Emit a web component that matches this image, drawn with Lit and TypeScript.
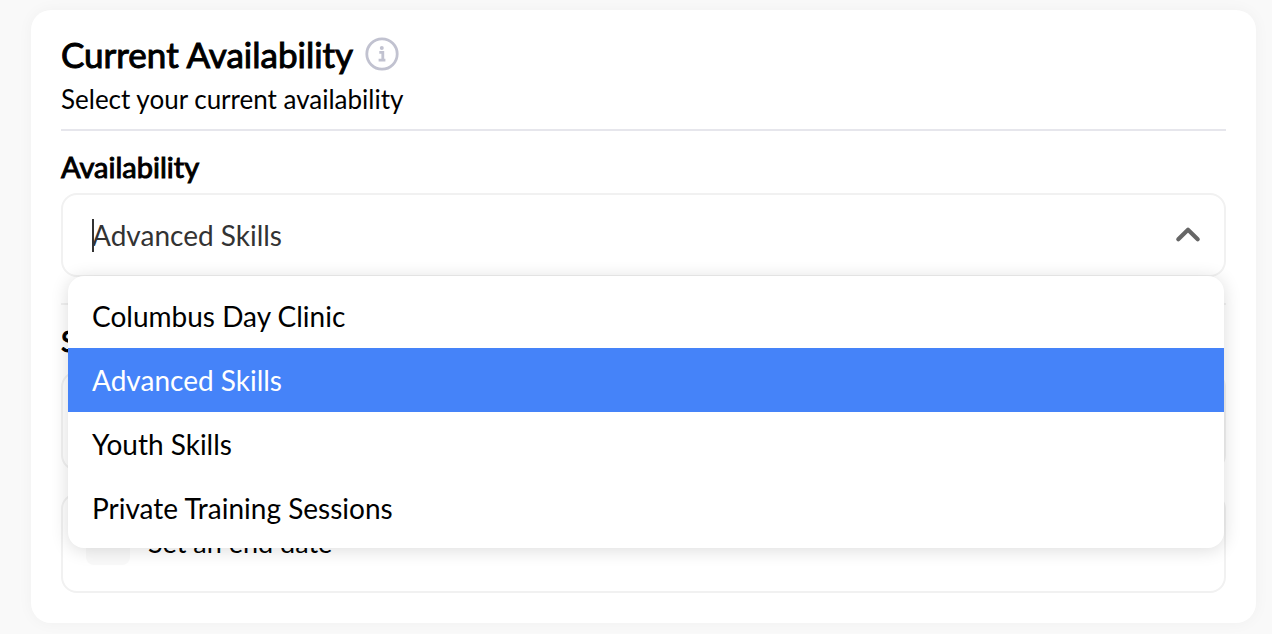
import { LitElement, html, css } from "lit";
import { customElement, state } from "lit/decorators.js";
import { classMap } from "lit/directives/class-map.js";

const PROGRAMS = [
  "Columbus Day Clinic",
  "Advanced Skills",
  "Youth Skills",
  "Private Training Sessions",
];

@customElement("program-select")
export class ProgramSelect extends LitElement {
  @state() private selected = "Advanced Skills";
  @state() private open = true;

  static styles = css`
    :host {
      display: block;
    }
    .field {
      display: grid;
      gap: 8px;
    }
    .label {
      font-size: 29px;
      line-height: 36px;
      -webkit-text-stroke: 1px currentColor;
    }
    .control {
      position: relative;
      display: flex;
      align-items: center;
      padding: 22px 20px 22px 29px;
      border: 2px solid #f1f1f1;
      border-radius: 16px;
    }
    .value {
      flex: 1;
      min-width: 0;
      height: 36px;
      padding: 0;
      border: 0;
      outline: 0;
      background: none;
      font: inherit;
      font-size: 28px;
      line-height: 36px;
      color: #333333;
    }
    .caret {
      position: absolute;
      left: 29px;
      top: 24px;
      width: 2px;
      height: 33px;
      background: #333333;
    }
    .toggle {
      display: flex;
      padding: 0;
      border: 0;
      background: none;
      color: #666666;
      cursor: pointer;
    }
    .closed {
      transform: rotate(180deg);
    }
    .menu {
      position: absolute;
      z-index: 2;
      top: 81px;
      left: 5px;
      right: 0;
      padding: 8px 0;
      border-radius: 16px;
      background: #ffffff;
      box-shadow: 0 2px 18px rgba(0, 0, 0, 0.14);
    }
    .option {
      display: block;
      width: 100%;
      padding: 14px 24px;
      border: 0;
      background: none;
      font: inherit;
      font-size: 28px;
      line-height: 36px;
      text-align: left;
      color: #000000;
      cursor: pointer;
    }
    .active {
      background: #4583f9;
      color: #ffffff;
    }
  `;

  private choose(name: string) {
    this.selected = name;
    this.open = false;
  }

  render() {
    return html`
      <div class="field">
        <label class="label" for="program">Availability</label>
        <div class="control">
          <input
            id="program"
            class="value"
            role="combobox"
            aria-controls="programs"
            aria-expanded=${this.open}
            readonly
            .value=${this.selected}
          />
          ${this.open ? html`<span class="caret"></span>` : ""}
          <button
            class="toggle"
            type="button"
            aria-label="Toggle options"
            @click=${() => (this.open = !this.open)}
          >
            <svg
              class=${classMap({ closed: !this.open })}
              width="32"
              height="32"
              viewBox="0 0 32 32"
              fill="none"
              stroke="currentColor"
              stroke-width="4.2"
              stroke-linecap="round"
              stroke-linejoin="round"
            >
              <path d="M6.3 20.2 16 10.8l9.7 9.4" />
            </svg>
          </button>
          ${this.open
            ? html`<div class="menu" id="programs" role="listbox">
                ${PROGRAMS.map(
                  (name) => html`<button
                    type="button"
                    role="option"
                    aria-selected=${name === this.selected}
                    class=${classMap({
                      option: true,
                      active: name === this.selected,
                    })}
                    @click=${() => this.choose(name)}
                  >
                    ${name}
                  </button>`
                )}
              </div>`
            : ""}
        </div>
      </div>
    `;
  }
}

@customElement("app-root")
export class AppRoot extends LitElement {
  static styles = css`
    :host {
      display: block;
      box-sizing: border-box;
      min-height: 100vh;
      padding: 10px 16px 12px 31px;
      background: #f9f9f9;
      color: #000000;
      font-family: Lato, "Liberation Sans", sans-serif;
    }
    .card {
      padding: 22px 30px 30px;
      border-radius: 20px;
      background: #ffffff;
      box-shadow: 0 0 16px rgba(0, 0, 0, 0.04);
    }
    .head {
      display: grid;
      gap: 7px;
      padding-bottom: 14px;
      border-bottom: 2px solid #e6e6ec;
    }
    .title-row {
      display: flex;
      align-items: center;
      gap: 12px;
    }
    .title {
      margin: 0;
      font-size: 35px;
      font-weight: 400;
      line-height: 44px;
      -webkit-text-stroke: 1px currentColor;
    }
    .info {
      display: flex;
      padding: 0;
      border: 0;
      background: none;
      color: #c1c2d0;
    }
    .sub {
      margin: 0;
      font-size: 26px;
      line-height: 32px;
    }
    .program {
      padding: 18px 0 26px;
      border-bottom: 2px solid #f1f1f1;
    }
    .start {
      display: grid;
      gap: 12px;
      padding: 18px 0 22px;
    }
    .label {
      font-size: 29px;
      line-height: 36px;
      -webkit-text-stroke: 1px currentColor;
    }
    .date {
      box-sizing: border-box;
      width: 100%;
      padding: 30px 29px;
      border: 2px solid #f1f1f1;
      border-radius: 16px;
      outline: 0;
      background: none;
      font: inherit;
      font-size: 28px;
      line-height: 36px;
    }
    .end {
      display: flex;
      align-items: center;
      gap: 18px;
      padding: 26px 23px;
      border: 2px solid #f1f1f1;
      border-radius: 16px;
      font-size: 27px;
      line-height: 36px;
    }
    .tick {
      appearance: none;
      width: 44px;
      height: 44px;
      margin: 0;
      border-radius: 8px;
      background: #f9f9f9;
    }
    .tick:checked {
      background: #4583f9;
    }
  `;

  render() {
    return html`
      <main class="card">
        <header class="head">
          <div class="title-row">
            <h1 class="title">Current Availability</h1>
            <button class="info" type="button" aria-label="More information">
              <svg width="34" height="34" viewBox="0 0 34 34" fill="none">
                <circle
                  cx="17"
                  cy="17"
                  r="15.2"
                  stroke="currentColor"
                  stroke-width="2.8"
                />
                <circle cx="16.8" cy="10.9" r="2" fill="currentColor" />
                <path
                  d="M14.3 15.4h3.5v7.8M13.6 23.2h6.8"
                  stroke="currentColor"
                  stroke-width="2.8"
                />
              </svg>
            </button>
          </div>
          <p class="sub">Select your current availability</p>
        </header>
        <program-select class="program"></program-select>
        <div class="start">
          <label class="label" for="start">Start date</label>
          <input class="date" id="start" type="text" />
        </div>
        <label class="end">
          <input class="tick" type="checkbox" />
          Set an end date
        </label>
      </main>
    `;
  }
}
